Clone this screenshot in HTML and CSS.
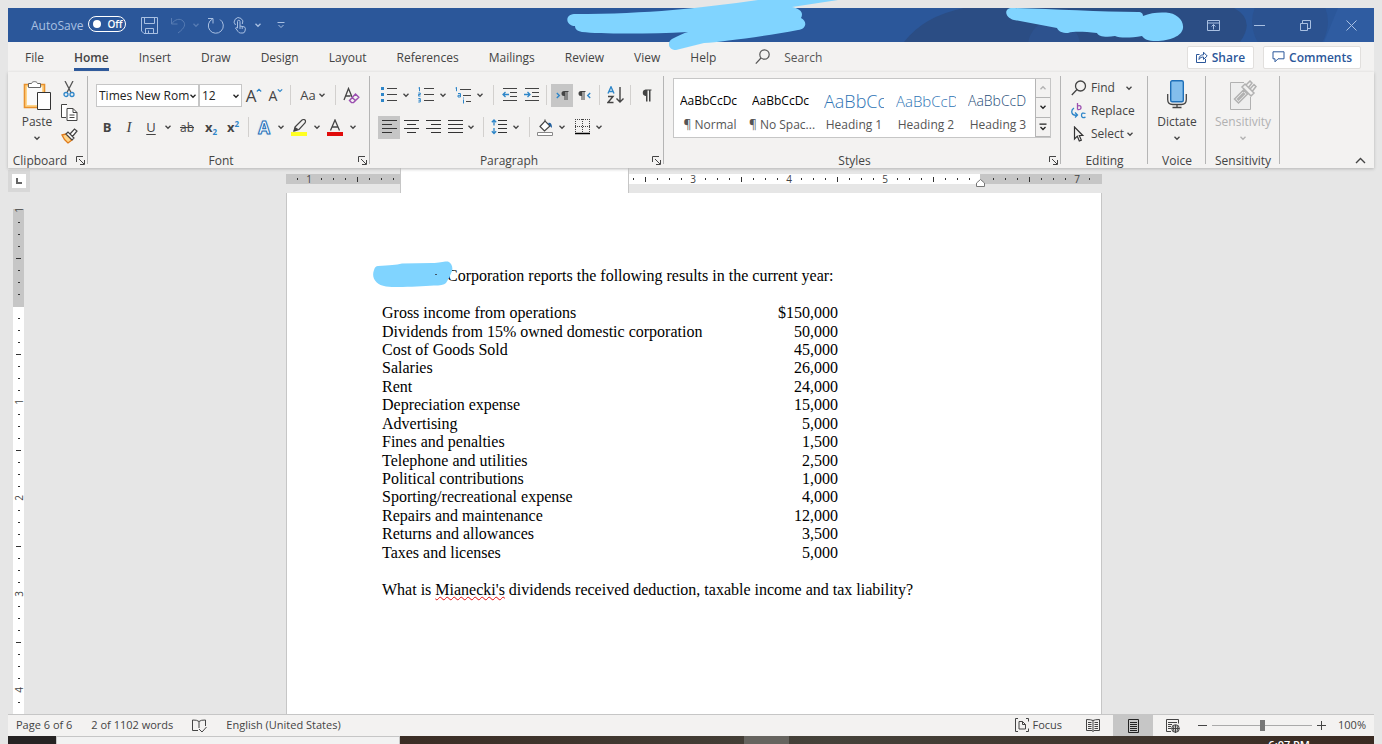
FILE: index.html
```html
<!DOCTYPE html>
<html lang="en">
    <head>
        <meta charset="UTF-8">
        <meta name="viewport" content="width=device-width, initial-scale=1.0">
        <title>Word</title>
        <link rel="stylesheet" href="styles.css">
    </head>
    <body>
        <svg class="defs" aria-hidden="true">
            <symbol id="caret" viewBox="0 0 8 8"><path d="M1.5 2.8 4 5.3 6.5 2.8" fill="none" stroke="currentColor" stroke-width="1.3"/></symbol>
            <symbol id="launcher" viewBox="0 0 9 9"><path d="M.5 6V.5H7M3 3l5 5M8.5 4v4.5H4" fill="none" stroke="currentColor"/></symbol>
        </svg>

        <div class="app">
            <header class="titlebar">
                <svg class="title-art" viewBox="0 0 470 34" preserveAspectRatio="xMaxYMid slice">
                    <path d="M60 0H330Q352 12 336 34H0Q20 8 60 0Z" fill="#2b4d84"/>
                    <circle cx="150" cy="38" r="26" fill="#2d528e"/>
                    <circle cx="386" cy="14" r="38" fill="#2b5290"/>
                    <path d="M434 0h36v34h-50Z" fill="#2f5ca1"/>
                </svg>
                <div class="quick-access">
                    <label for="autosave">AutoSave</label>
                    <span class="switch">
                        <input type="checkbox" id="autosave">
                        <span>Off</span>
                    </span>
                    <button class="quick save" aria-label="Save">
                        <svg width="17" height="17" viewBox="0 0 17 17"><path d="M.5.5h16v16H3L.5 14ZM3.500.5v6h10v-6M4.500 16.500v-5h8v5M7.500 16v-2.500" /></svg>
                    </button>
                    <button class="quick faded" aria-label="Undo">
                        <svg width="16" height="17" viewBox="0 0 16 17"><path d="M1.500 1v6h6M1.500 7C5 2 10 1 13 4s2 7-5 12"/></svg>
                    </button>
                    <button class="quick-caret faded" aria-label="Undo list"><svg class="caret"><use href="#caret"/></svg></button>
                    <button class="quick" aria-label="Repeat">
                        <svg width="18" height="17" viewBox="0 0 18 17"><path d="M1 1.500h5v5M5.500 2A7.500 7.500 0 1 0 13 2.500"/></svg>
                    </button>
                    <button class="quick touch" aria-label="Touch mode">
                        <svg width="14" height="17" viewBox="0 0 14 17"><path d="M4.500 11V4.500a1.200 1.200 0 0 1 2.500 0V9l4 .8q1.500.4 1.400 2L12 14q-.5 2-2 2H7.500q-1.500 0-2.500-1.500L2.500 11q.8-1.200 2 0M2.500 8A4.300 4.300 0 1 1 9.300 7M7 9v3M9.200 9.500v2.500"/></svg>
                    </button>
                    <button class="quick-caret" aria-label="Touch options"><svg class="caret"><use href="#caret"/></svg></button>
                    <button class="quick-caret more" aria-label="Customize toolbar">
                        <svg width="8" height="8" viewBox="0 0 8 8"><path d="M.5 1.500h7M1.500 4 4 6.500 6.500 4"/></svg>
                    </button>
                </div>
                <div class="window-buttons">
                    <button aria-label="Ribbon display options"><svg width="13" height="11" viewBox="0 0 13 11"><path d="M.5.5h12v10H.5ZM.5 3h12M6.500 9.500v-5M4.500 6.500l2-2 2 2"/></svg></button>
                    <button aria-label="Minimize"><svg width="11" height="11" viewBox="0 0 11 11"><path d="M0 5.500h11"/></svg></button>
                    <button aria-label="Restore"><svg width="11" height="11" viewBox="0 0 11 11"><path d="M.5 3.500h7v7h-7ZM2.500 3.500v-3h8v8h-3"/></svg></button>
                    <button aria-label="Close"><svg width="11" height="11" viewBox="0 0 11 11"><path d="m.5.5 10 10M10.500.5l-10 10"/></svg></button>
                </div>
                <svg class="mark mark-title" width="272" height="52" viewBox="566 0 272 52"><path d="M574 14C650 14 700 8 758 0H838L792 7C800 9 804 12 801 18 808 22 806 29 798 30 760 37 720 42 704 43L676 50C668 50 667 42 672 39 678 36 684 33 688 32 650 34 600 34 582 32 577 31 575 29 575 26 566 26 564 15 574 14Z"/></svg>
                <svg class="mark mark-user" width="180" height="36" viewBox="1005 7 180 36"><path d="M1012 8C1050 9 1100 12 1138 12 1142 12 1143 14 1143 16 1150 13 1158 12 1166 12.500 1176 13 1184 20 1183 28 1182 36 1170 41 1156 41 1148 41 1144 39 1142 36 1130 38 1120 38 1115 36 1105 38 1098 36 1097 33 1085 32 1075 31 1068 33 1062 33 1058 31 1057 28L1014 20C1004 17 1004 8 1012 8Z"/></svg>
            </header>

            <nav class="tabs">
                <button>File</button>
                <button class="active">Home</button>
                <button>Insert</button>
                <button>Draw</button>
                <button>Design</button>
                <button>Layout</button>
                <button>References</button>
                <button>Mailings</button>
                <button>Review</button>
                <button>View</button>
                <button>Help</button>
                <label class="search" for="search">
                    <svg width="16" height="16" viewBox="0 0 16 16" fill="none" stroke="#555" stroke-width="1.2"><circle cx="9.500" cy="5.500" r="4.700"/><path d="M6 9 .8 14.600"/></svg>
                    <input type="text" id="search" placeholder="Search" aria-label="Search">
                </label>
                <button class="boxed">
                    <svg width="12" height="12" viewBox="0 0 12 12" fill="none" stroke="#2b579a"><path d="M3.500 3.500h-3v8h9V8M3 8.500C3 5 5 3.800 7.500 3.800V1.200L11.200 5 7.500 8.400V6C5.500 6 4 6.500 3 8.500Z"/></svg>
                    Share
                </button>
                <button class="boxed">
                    <svg width="13" height="12" viewBox="0 0 13 12" fill="none" stroke="#2b579a"><path d="M1 .8h11v7H6l-3 3v-3H1Z"/></svg>
                    Comments
                </button>
            </nav>

            <section class="ribbon">
                <div class="group clipboard">
                    <div class="group-body">
                        <button class="big">
                            <svg width="28" height="30" viewBox="0 0 28 30">
                                <path d="M1.500 4.500h20v23h-20Z" fill="#ffd58a" stroke="#e8912d" stroke-width="1.600"/>
                                <path d="M4 7h15v18H4Z" fill="#fafafa"/>
                                <path d="M5.500 3.500h3C9 1 14 1 14.500 3.500h3v4h-12Z" fill="#fff" stroke="#666"/>
                                <path d="M14.500 12.500h13v17h-13Z" fill="#fff" stroke="#333"/>
                            </svg>
                            <span>Paste</span>
                            <svg class="caret"><use href="#caret"/></svg>
                        </button>
                        <div class="stack">
                            <button aria-label="Cut"><svg width="12" height="17" viewBox="0 0 12 17" fill="none"><path d="m2 0 6 11.500M10 0 4 11.500" stroke="#555" stroke-width="1.300"/><circle cx="3" cy="13.500" r="2" stroke="#2e86c9" stroke-width="1.300"/><circle cx="9" cy="13.500" r="2" stroke="#2e86c9" stroke-width="1.300"/></svg></button>
                            <button aria-label="Copy"><svg width="17" height="17" viewBox="0 0 17 17" fill="#fff" stroke="#444"><path d="M6 .500H.5V13.500H5M6 4.500h6l4 4v8H6Z"/><path d="M12 4.500v4h4M8.500 11h5M8.500 13.500h5" fill="none"/></svg></button>
                            <button aria-label="Format painter"><svg width="17" height="16" viewBox="0 0 17 16"><path d="m1 7 4-1 6 6-4 3Q3 12 1 7Z" fill="#ffd58a" stroke="#e07b1a" stroke-width="1.300"/><path d="m5 6 2-2 6 6-2 2ZM9 6l4.500-5 2.500 2-4.500 5.500Z" fill="#fff" stroke="#444" stroke-width="1.200"/></svg></button>
                        </div>
                    </div>
                    <footer><span>Clipboard</span><button class="launcher" aria-label="Clipboard options"><svg><use href="#launcher"/></svg></button></footer>
                </div>

                <div class="group font">
                    <div class="row">
                        <span class="combo name"><select aria-label="Font"><option>Times New Rom</option></select><svg class="caret"><use href="#caret"/></svg></span>
                        <span class="combo size"><select aria-label="Font size"><option>12</option></select><svg class="caret"><use href="#caret"/></svg></span>
                        <button class="tool grow" aria-label="Grow font"><span class="letter">A</span><svg width="6" height="14" viewBox="0 0 6 14" fill="none" stroke="#2e86c9" stroke-width="1.200"><path d="M.8 3.500 3 1.300l2.200 2.200"/></svg></button>
                        <button class="tool shrink" aria-label="Shrink font"><span class="letter">A</span><svg width="6" height="14" viewBox="0 0 6 14" fill="none" stroke="#2e86c9" stroke-width="1.200"><path d="M.8 1.300 3 3.500l2.200-2.200"/></svg></button>
                        <i class="bar"></i>
                        <button class="tool case">Aa<svg class="caret"><use href="#caret"/></svg></button>
                        <i class="bar"></i>
                        <button class="tool clear" aria-label="Clear formatting"><svg width="17" height="17" viewBox="0 0 17 17" fill="none"><path d="M1 13 5.500 1.500 9 10M2.500 9h5" stroke="#444" stroke-width="1.300"/><path d="m12.500 7 3.300 3.300-5.300 5.300h-2l-2-2ZM9 10.300l3.300 3.300" stroke="#9b4fb0" stroke-width="1.400"/></svg></button>
                    </div>
                    <div class="row">
                        <button class="tool bold">B</button>
                        <button class="tool italic">I</button>
                        <button class="tool underline">U</button>
                        <button class="drop" aria-label="Underline styles"><svg class="caret"><use href="#caret"/></svg></button>
                        <button class="tool strike">ab</button>
                        <button class="tool script">x<sub>2</sub></button>
                        <button class="tool script">x<sup>2</sup></button>
                        <i class="bar"></i>
                        <button class="tool effects">A</button>
                        <button class="drop" aria-label="Text effects list"><svg class="caret"><use href="#caret"/></svg></button>
                        <button class="tool wide" aria-label="Highlight"><svg width="16" height="17" viewBox="0 0 16 17"><path d="m4 8 7-7q2-1 3 0t0 3L8 10.500 3 12Z" fill="#f3f2f1" stroke="#444" stroke-width="1.200"/><path d="m2.500 12 1.500-4 4 2.500Z" fill="#444"/><path d="M0 13h16v4H0Z" fill="#ff2"/></svg></button>
                        <button class="drop" aria-label="Highlight colors"><svg class="caret"><use href="#caret"/></svg></button>
                        <button class="tool wide" aria-label="Font color"><svg width="16" height="17" viewBox="0 0 16 17"><path d="M3.500 11.500 8 1l4.500 10.500M5 8h6" fill="none" stroke="#444" stroke-width="1.300"/><path d="M0 13h16v4H0Z" fill="#e00b0b"/></svg></button>
                        <button class="drop" aria-label="Font colors"><svg class="caret"><use href="#caret"/></svg></button>
                    </div>
                    <footer><span>Font</span><button class="launcher" aria-label="Font options"><svg><use href="#launcher"/></svg></button></footer>
                </div>

                <div class="group paragraph">
                    <div class="row">
                        <button class="tool" aria-label="Bullets"><svg width="16" height="16" viewBox="0 0 16 16"><path d="M0 0h3v3H0ZM0 6h3v3H0ZM0 12h3v3H0Z" fill="#2e86c9"/><path d="M6 1.500h10M6 7.500h10M6 13.500h10" stroke="#444"/></svg></button>
                        <button class="drop" aria-label="Bullet styles"><svg class="caret"><use href="#caret"/></svg></button>
                        <button class="tool" aria-label="Numbering"><svg width="16" height="16" viewBox="0 0 16 16"><path d="M6 1.500h10M6 7.500h10M6 13.500h10" stroke="#444"/><path d="m.5 1 1-.8v4M.3 6h2v1.500h-2V9h2.200M.3 11.500h2V15h-2M.5 13.200h1.700" fill="none" stroke="#2e86c9"/></svg></button>
                        <button class="drop" aria-label="Numbering styles"><svg class="caret"><use href="#caret"/></svg></button>
                        <button class="tool" aria-label="Multilevel list"><svg width="16" height="17" viewBox="0 0 16 17"><path d="M5 2.500h11M8 8.500h8M11 14.500h5" stroke="#444"/><path d="m.5 1 1-.8v4M3 6.500h2.500V10H3V8.300h2.500M8.500 12.500v4M8.500 10.500v1" fill="none" stroke="#2e86c9"/></svg></button>
                        <button class="drop" aria-label="List levels"><svg class="caret"><use href="#caret"/></svg></button>
                        <i class="bar"></i>
                        <button class="tool" aria-label="Decrease indent"><svg width="15" height="14" viewBox="0 0 15 14" fill="none"><path d="M1 .5h14M8 4.500h7M8 8.500h7M1 12.500h14" stroke="#444"/><path d="M7 6.500H1M3.500 4 1 6.500 3.500 9" stroke="#2e86c9" stroke-width="1.300"/></svg></button>
                        <button class="tool" aria-label="Increase indent"><svg width="15" height="14" viewBox="0 0 15 14" fill="none"><path d="M1 .5h14M8 4.500h7M8 8.500h7M1 12.500h14" stroke="#444"/><path d="M0 6.500h6M3.500 4 6 6.500 3.500 9" stroke="#2e86c9" stroke-width="1.300"/></svg></button>
                        <i class="bar"></i>
                        <button class="tool on" aria-label="Left to right"><svg width="13" height="11" viewBox="0 0 13 11"><path d="m.8 3 2.500 2.500L.8 8" fill="none" stroke="#2e86c9" stroke-width="1.400"/><path d="M12.500 1H8a2.500 2.500 0 0 0 0 5h.5v4h1V2h1v8h1V2h1Z" fill="#444"/></svg></button>
                        <button class="tool" aria-label="Right to left"><svg width="13" height="11" viewBox="0 0 13 11"><path d="M12.200 3 9.700 5.500 12.200 8" fill="none" stroke="#2e86c9" stroke-width="1.400"/><path d="M7.500 1H3a2.500 2.500 0 0 0 0 5h.5v4h1V2h1v8h1V2h1Z" fill="#444"/></svg></button>
                        <i class="bar"></i>
                        <button class="tool" aria-label="Sort"><svg width="17" height="18" viewBox="0 0 17 18" fill="none" stroke-width="1.400"><path d="M1 7.500 4 .8l3 6.700M2 5.500h4" stroke="#2e86c9"/><path d="M1 10.500h5L1 16.500h5.500M13 1v15M9.500 12.500 13 16l3.500-3.500" stroke="#444"/></svg></button>
                        <i class="bar"></i>
                        <button class="tool" aria-label="Show marks"><svg width="11" height="13" viewBox="0 0 11 13"><path d="M10.500.5H4.500a3.300 3.300 0 0 0 0 6.500H5v5.500h1.500v-11h1.500v11h1.500v-11h1Z" fill="#444"/></svg></button>
                    </div>
                    <div class="row">
                        <button class="tool on" aria-label="Align left"><svg width="15" height="14" viewBox="0 0 15 14" stroke="#333"><path d="M0 .5h15M0 4.500h10M0 8.500h15M0 12.500h10"/></svg></button>
                        <button class="tool" aria-label="Center"><svg width="15" height="14" viewBox="0 0 15 14" stroke="#333"><path d="M0 .5h15M3 4.500h9M0 8.500h15M3 12.500h9"/></svg></button>
                        <button class="tool" aria-label="Align right"><svg width="15" height="14" viewBox="0 0 15 14" stroke="#333"><path d="M0 .5h15M5 4.500h10M0 8.500h15M5 12.500h10"/></svg></button>
                        <button class="tool" aria-label="Justify"><svg width="15" height="14" viewBox="0 0 15 14" stroke="#333"><path d="M0 .5h15M0 4.500h15M0 8.500h15M0 12.500h15"/></svg></button>
                        <button class="drop close" aria-label="Justify options"><svg class="caret"><use href="#caret"/></svg></button>
                        <i class="bar"></i>
                        <button class="tool" aria-label="Line spacing"><svg width="17" height="16" viewBox="0 0 17 16" fill="none"><path d="M7 1.500h9M7 5.500h9M7 9.500h9M7 13.500h9" stroke="#333"/><path d="M3 1v5.500M.8 3.200 3 1l2.200 2.200M3 9v5.500M.8 12.300 3 14.500l2.200-2.200" stroke="#2e86c9" stroke-width="1.300"/></svg></button>
                        <button class="drop" aria-label="Spacing options"><svg class="caret"><use href="#caret"/></svg></button>
                        <i class="bar"></i>
                        <button class="tool" aria-label="Shading"><svg width="17" height="17" viewBox="0 0 17 17"><path d="M3 7.500 8 2l5 5-5.500 5ZM8 2V.5" fill="#fff" stroke="#444" stroke-width="1.200"/><path d="M11 4q4-1 4 5l-2-2Z" fill="#1f5f9e"/><path d="M.5 13.500h15v3H.5Z" fill="#fff" stroke="#888"/></svg></button>
                        <button class="drop" aria-label="Shading colors"><svg class="caret"><use href="#caret"/></svg></button>
                        <button class="tool" aria-label="Borders"><svg width="15" height="16" viewBox="0 0 15 16"><path d="M0 .5h15M0 7.500h15M.5 0v14M7.500 0v14M14.500 0v14" stroke="#444" stroke-dasharray="1 1"/><path d="M0 14.500h15" stroke="#000" stroke-width="1.500"/></svg></button>
                        <button class="drop" aria-label="Border styles"><svg class="caret"><use href="#caret"/></svg></button>
                    </div>
                    <footer><span>Paragraph</span><button class="launcher" aria-label="Paragraph options"><svg><use href="#launcher"/></svg></button></footer>
                </div>

                <div class="group styles">
                    <div class="gallery">
                        <button class="style"><span class="sample">AaBbCcDc</span><span>¶ Normal</span></button>
                        <button class="style"><span class="sample">AaBbCcDc</span><span>¶ No Spac...</span></button>
                        <button class="style h1"><span class="sample">AaBbCc</span><span>Heading 1</span></button>
                        <button class="style h2"><span class="sample">AaBbCcD</span><span>Heading 2</span></button>
                        <button class="style h3"><span class="sample">AaBbCcD</span><span>Heading 3</span></button>
                        <div class="scroller">
                            <button class="up" aria-label="Scroll up"><svg class="caret"><use href="#caret"/></svg></button>
                            <button aria-label="Scroll down"><svg class="caret"><use href="#caret"/></svg></button>
                            <button aria-label="More styles"><svg width="8" height="8" viewBox="0 0 8 8" fill="none" stroke="#222" stroke-width="1.300"><path d="M.5 1.200h7M1.500 4 4 6.500 6.500 4"/></svg></button>
                        </div>
                    </div>
                    <footer><span>Styles</span><button class="launcher" aria-label="Style options"><svg><use href="#launcher"/></svg></button></footer>
                </div>

                <div class="group editing">
                    <div class="edit-list">
                        <button class="find"><svg width="16" height="16" viewBox="0 0 16 16" fill="none" stroke="#444" stroke-width="1.300"><circle cx="9.500" cy="6" r="5"/><path d="M6 9.500.8 15"/></svg><span>Find</span><svg class="caret"><use href="#caret"/></svg></button>
                        <button><svg width="16" height="16" viewBox="0 0 16 16" fill="none" stroke-width="1.300"><path d="M6.500 0v6.500M6.500 3q3.500-1 3.500 1.500T6.500 6.500" stroke="#9b4fb0"/><path d="M14.500 10.500q-4-1.500-4 1.800t4 1.800M3 5q-3 2-2 5t5.500 2M4 9.500l2.500 2.500L4 14.500" stroke="#2e86c9"/></svg><span>Replace</span></button>
                        <button><svg width="16" height="16" viewBox="0 0 16 16" fill="none" stroke="#333" stroke-width="1.200"><path d="M3.500 1v12l2.800-2.800 2 4.800 2-.9-2-4.600h3.500Z"/></svg><span>Select</span><svg class="caret"><use href="#caret"/></svg></button>
                    </div>
                    <footer><span>Editing</span></footer>
                </div>

                <div class="group voice">
                    <div class="group-body">
                        <button class="big">
                            <svg width="20" height="30" viewBox="0 0 20 30" fill="none"><rect x="3.700" y=".7" width="12.600" height="21" rx="1.500" fill="#83beec" stroke="#1e6fb8" stroke-width="1.400"/><path d="M.7 14v5.500q0 5 5 5h8.600q5 0 5-5V14M10 24.500v3M5.500 27.500h9" stroke="#444" stroke-width="1.300"/></svg>
                            <span>Dictate</span>
                            <svg class="caret"><use href="#caret"/></svg>
                        </button>
                    </div>
                    <footer><span>Voice</span></footer>
                </div>

                <div class="group sensitivity">
                    <div class="group-body">
                        <button class="big" disabled>
                            <svg width="28" height="30" viewBox="0 0 28 30" fill="none" stroke="#b1b1b1"><path d="M15 2.500H1.500v27h20V17" fill="#eee"/><path d="m5.500 19 9-9 4 4-9 9ZM8.500 19l6-6 1 1-6 6Z" stroke-width="1.500"/><path d="m13 7 3-3 9 9-3 3ZM17 5l4-4 2 2-3.500 4.500M21 9l4-4.500 2 2L23.500 11" stroke-width="1.500"/></svg>
                            <span>Sensitivity</span>
                            <svg class="caret"><use href="#caret"/></svg>
                        </button>
                    </div>
                    <footer><span>Sensitivity</span></footer>
                </div>
                <button class="collapse" aria-label="Collapse ribbon"><svg width="11" height="7" viewBox="0 0 11 7"><path d="M1 6 5.500 1.500 10 6" fill="none" stroke="#444" stroke-width="1.400"/></svg></button>
            </section>

            <main class="workspace">
                <div class="side">
                    <button class="tab-stop" aria-label="Tab stop"><svg width="6" height="6" viewBox="0 0 6 6"><path d="M1 0v5h5" fill="none" stroke="#666" stroke-width="2"/></svg></button>
                    <div class="v-ruler">
                        <div class="ticks shade"><b>1</b><i></i><i></i><i></i><i class="half"></i><i></i><i></i><i></i></div>
                        <div class="ticks">
                            <i></i><i></i><i></i><i class="half"></i><i></i><i></i><i></i>
                            <b>1</b><i></i><i></i><i></i><i class="half"></i><i></i><i></i><i></i>
                            <b>2</b><i></i><i></i><i></i><i class="half"></i><i></i><i></i><i></i>
                            <b>3</b><i></i><i></i><i></i><i class="half"></i><i></i><i></i><i></i>
                            <b>4</b><i></i>
                        </div>
                    </div>
                </div>
                <div class="sheet">
                    <div class="h-ruler">
                        <div class="ticks shade start"><i></i><b>1</b><i></i><i></i><i></i><i class="half"></i><i></i><i></i><i></i></div>
                        <div class="blank"></div>
                        <div class="ticks middle">
                            <i></i><i class="half"></i><i></i><i></i><i></i>
                            <b>3</b><i></i><i></i><i></i><i class="half"></i><i></i><i></i><i></i>
                            <b>4</b><i></i><i></i><i></i><i class="half"></i><i></i><i></i><i></i>
                            <b>5</b><i></i><i></i><i></i><i class="half"></i><i></i><i></i><i></i>
                        </div>
                        <div class="ticks shade end">
                            <i></i><i></i><i></i><i class="half"></i><i></i><i></i><i></i><b>7</b><i></i>
                            <svg class="indent" width="9" height="8" viewBox="0 0 9 8"><path d="M.5 7.500V4l4-3.500 4 3.500v3.500Z" fill="#fff" stroke="#777"/></svg>
                        </div>
                    </div>
                    <article class="page">
                        <p><span class="redacted"><svg class="mark" width="82" height="28" viewBox="372 260 82 28"><path d="M378 266C390 265 396 265 402 263.500L432 263C440 263 444 261 448 261.500 452 263 453 268 452 271 450 276 448 280 446 283 444 285 440 285.500 434 285.500 420 286 400 288 386 286.500 376 285 371 278 374 270 375 267 376 266 378 266Z"/><path d="M435 274.500h2" stroke="#456"/></svg></span>Corporation reports the following results in the current year:</p>
                        <table>
                            <tr><td>Gross income from operations</td><td>$150,000</td></tr>
                            <tr><td>Dividends from 15% owned domestic corporation</td><td>50,000</td></tr>
                            <tr><td>Cost of Goods Sold</td><td>45,000</td></tr>
                            <tr><td>Salaries</td><td>26,000</td></tr>
                            <tr><td>Rent</td><td>24,000</td></tr>
                            <tr><td>Depreciation expense</td><td>15,000</td></tr>
                            <tr><td>Advertising</td><td>5,000</td></tr>
                            <tr><td>Fines and penalties</td><td>1,500</td></tr>
                            <tr><td>Telephone and utilities</td><td>2,500</td></tr>
                            <tr><td>Political contributions</td><td>1,000</td></tr>
                            <tr><td>Sporting/recreational expense</td><td>4,000</td></tr>
                            <tr><td>Repairs and maintenance</td><td>12,000</td></tr>
                            <tr><td>Returns and allowances</td><td>3,500</td></tr>
                            <tr><td>Taxes and licenses</td><td>5,000</td></tr>
                        </table>
                        <p>What is <span class="misspelled">Mianecki's</span> dividends received deduction, taxable income and tax liability?</p>
                    </article>
                </div>
            </main>

            <footer class="statusbar">
                <span>Page 6 of 6</span>
                <span>2 of 1102 words</span>
                <svg width="15" height="14" viewBox="0 0 15 14" fill="none" stroke="#444"><path d="M7 2.500Q5 .8.500 1v10.500H6M7 2.500Q9 .8 13.500 1v6M7 2.500V9M7 10l3 3 4.500-5"/></svg>
                <span>English (United States)</span>
                <div class="view-tools">
                    <button class="focus"><svg width="14" height="14" viewBox="0 0 14 14" fill="none" stroke="#444"><path d="M3 .5H.5V13.500H3M11 .5h2.500v3M11 13.500h2.500v-3M4 3.500h3.500l3 3v4.500H4ZM7.500 3.500v3h3"/></svg>Focus</button>
                    <button class="view" aria-label="Read mode"><svg width="14" height="13" viewBox="0 0 14 13" fill="none" stroke="#444"><path d="M7 1.500Q5 .500.500.5v11H6L7 12.500 8 11.500h5.500V.500Q9 .5 7 1.500ZM7 1.500v11M2 3.500h3.500M2 5.500h3.500M2 7.500h3.500M2 9.500h3.500M8.500 3.500H12M8.500 5.500H12M8.500 7.500H12M8.500 9.500H12"/></svg></button>
                    <button class="view on" aria-label="Print layout"><svg width="11" height="14" viewBox="0 0 11 14" fill="none" stroke="#222"><path d="M.5.5h10v13H.5ZM2 3.500h7M2 5.500h7M2 7.500h7M2 9.500h7M2 11.500h7"/></svg></button>
                    <button class="view" aria-label="Web layout"><svg width="14" height="14" viewBox="0 0 14 14" fill="none" stroke="#444"><path d="M5 12.500H.5V.5h12v4M2 3.500h9M2 5.500h4M2 7.500h3M2 9.500h3"/><circle cx="9.500" cy="9.500" r="3.800"/><path d="M5.500 9.500h8M9.500 6v8M8 6.500Q7 9.500 8 12.500M11 6.500q1 3 0 6"/></svg></button>
                    <button class="zoom-step" aria-label="Zoom out"><svg width="9" height="9" viewBox="0 0 9 9" stroke="#444"><path d="M0 4.500h9"/></svg></button>
                    <input type="range" min="0" max="100" value="50" aria-label="Zoom">
                    <button class="zoom-step" aria-label="Zoom in"><svg width="9" height="9" viewBox="0 0 9 9" stroke="#444"><path d="M0 4.500h9M4.500 0v9"/></svg></button>
                    <span class="percent">100%</span>
                </div>
            </footer>
            <div class="taskbar">
                <div class="task-search"></div>
                <div class="task-active"></div>
                <time>6:07 PM</time>
            </div>
        </div>
    </body>
</html>
```
FILE: styles.css
```css
*{
    margin: 0;
    padding: 0;
    box-sizing: border-box;
}

body{
    height: 100vh;
    padding: 8px 8px 0;
    overflow: hidden;
    background-color: #e6e6e6;
    font-family: "Open Sans", "Noto Sans", sans-serif;
    font-size: 12px;
    color: #444;
}

button, input, select{
    font: inherit;
    color: inherit;
    background: none;
    border: none;
    outline: none;
}

button{
    display: flex;
    align-items: center;
    justify-content: center;
    flex-shrink: 0;
}

svg{
    flex-shrink: 0;
}

.defs{
    position: absolute;
    width: 0;
    height: 0;
}

.caret{
    width: 8px;
    height: 8px;
}

.app{
    display: flex;
    flex-direction: column;
    height: 100%;
}

.mark{
    position: absolute;
    fill: #80d4ff;
    z-index: 2;
}

/* title bar */
.titlebar{
    position: relative;
    display: flex;
    justify-content: space-between;
    height: 34px;
    background-color: #2b579a;
    color: #a9c0e2;
}

.titlebar svg:not(.mark):not(.title-art){
    fill: none;
    stroke: currentColor;
}

.title-art{
    position: absolute;
    right: 0;
    top: 0;
    width: 470px;
    height: 34px;
}

.mark-title{
    left: 558px;
    top: -8px;
}

.mark-user{
    right: 189px;
    top: -1px;
}

.quick-access, .window-buttons{
    position: relative;
    display: flex;
    align-items: center;
}

.quick-access{
    padding-left: 23px;
}

.switch{
    display: flex;
    align-items: center;
    width: 38px;
    height: 16px;
    margin: 0 11px 2px 5px;
    padding-left: 4px;
    gap: 6px;
    border: 1px solid white;
    border-radius: 8px;
    font-size: 10px;
    font-weight: 600;
    color: white;
}

.switch input{
    appearance: none;
    width: 8px;
    height: 8px;
    border-radius: 50%;
    background-color: white;
}

.quick{
    width: 24px;
    height: 24px;
}

.quick.save{
    margin-right: 5px;
}

.quick-caret{
    width: 12px;
    height: 24px;
    margin-right: 2px;
}

.quick-caret.more{
    margin-left: 9px;
}

.faded{
    opacity: 0.35;
}

.window-buttons button{
    width: 46px;
    height: 32px;
}

/* tabs */
.tabs{
    display: flex;
    align-items: center;
    height: 30px;
    padding: 0 13px 0 2px;
    background-color: #f3f2f1;
}

.tabs button{
    height: 28px;
    margin: 0 15px;
}

.tabs .active{
    border-bottom: 3px solid #2b579a;
    padding-top: 3px;
    font-weight: 600;
}

.search{
    display: flex;
    align-items: center;
    flex: 1;
    gap: 13px;
    margin-left: 24px;
}

.search input{
    width: 160px;
}

.search input::placeholder{
    color: #555;
    opacity: 1;
}

.tabs .boxed{
    height: 23px;
    margin: 0 0 0 9px;
    padding: 0 8px;
    gap: 4px;
    background-color: white;
    border: 1px solid #e1dfdd;
    border-radius: 2px;
    font-weight: 600;
    color: #2b579a;
}

/* ribbon */
.ribbon{
    position: relative;
    z-index: 1;
    display: flex;
    height: 96px;
    background-color: #f3f2f1;
    box-shadow: 0 1px 3px #b5b5b5;
}

.group{
    display: flex;
    flex-direction: column;
    flex-shrink: 0;
    padding-top: 11px;
    background: linear-gradient(#b5b5b5, #b5b5b5) right 0 top 4px / 1px 88px no-repeat;
}

.clipboard{ width: 80px; }
.font{ width: 282px; }
.paragraph{ width: 294px; }
.styles{ width: 397px; }
.editing{ width: 87px; }
.voice{ width: 58px; }
.sensitivity{ width: 74px; }

.clipboard, .styles, .voice, .sensitivity{
    padding-top: 6px;
}

.editing{
    padding-top: 4px;
}

.group footer{
    display: flex;
    align-items: center;
    height: 16px;
    margin-top: auto;
    text-align: center;
}

.group footer span{
    flex: 1;
}

.launcher{
    width: 16px;
    height: 16px;
}

.launcher svg{
    width: 9px;
    height: 9px;
}

.group-body{
    display: flex;
    justify-content: center;
}

.clipboard .group-body{
    padding-right: 2px;
}

.big{
    flex-direction: column;
    justify-content: flex-start;
    width: 44px;
    padding-top: 2px;
}

.big span{
    line-height: 24px;
}

.big:disabled{
    color: #b1b1b1;
}

.stack button{
    width: 20px;
    height: 23px;
}

.row{
    display: flex;
    align-items: center;
    height: 24px;
    margin-bottom: 8px;
    padding-left: 8px;
}

.tool{
    width: 22px;
    height: 23px;
    font-size: 13px;
}

.tool.wide{
    width: 24px;
}

.drop{
    width: 15px;
    height: 23px;
    padding-right: 3px;
}

.drop.close{
    width: 13px;
}

.font .drop{
    width: 12px;
    padding: 0;
}

.on{
    background-color: #c6c6c6;
}

.bar{
    width: 1px;
    height: 20px;
    margin: 0 4px;
    background-color: #d2d0ce;
}

.combo{
    position: relative;
    height: 23px;
    background-color: white;
    border: 1px solid #c6c6c6;
    color: #222;
}

.combo select{
    appearance: none;
    width: 100%;
    height: 21px;
    padding-left: 2px;
}

.combo .caret{
    position: absolute;
    right: 1px;
    top: 7px;
    pointer-events: none;
}

.combo.name{
    width: 103px;
}

.combo.size{
    width: 43px;
}

.grow{
    width: 24px;
}

.shrink{
    width: 20px;
}

.letter{
    font-size: 17px;
}

.shrink .letter{
    font-size: 14px;
}

.case{
    width: 36px;
    gap: 2px;
}

.bold{
    font-weight: bold;
}

.italic{
    font-family: "Liberation Serif", serif;
    font-size: 15px;
    font-style: italic;
}

.underline{
    text-decoration: underline;
    text-underline-offset: 2px;
}

.strike{
    width: 26px;
    font-size: 12px;
    text-decoration: line-through;
}

.script{
    font-weight: bold;
}

.script sub, .script sup{
    font-size: 8px;
    color: #2e86c9;
}

.script sub{
    margin-top: 8px;
}

.script sup{
    margin-bottom: 8px;
}

.effects{
    font-size: 17px;
    font-weight: bold;
    color: white;
    -webkit-text-stroke: 1px #1e6fb8;
    text-shadow: 0 0 2px #7fb8e6;
}

/* style gallery */
.gallery{
    display: flex;
    height: 60px;
    margin: 0 10px 0 9px;
    background-color: white;
    border: 1px solid #c6c6c6;
}

.style{
    flex-direction: column;
    width: 72px;
    padding-top: 8px;
    color: #555;
}

.style span{
    line-height: 22px;
}

.style .sample{
    width: 60px;
    line-height: 26px;
    overflow: hidden;
    text-align: left;
    color: black;
}

.style.h1 .sample{
    font-size: 18px;
    font-weight: 300;
    color: #2e74b5;
}

.style.h2 .sample{
    font-size: 15px;
    font-weight: 300;
    color: #2e74b5;
}

.style.h3 .sample{
    font-size: 14px;
    font-weight: 300;
    color: #1f4d78;
}

.scroller{
    display: flex;
    flex-direction: column;
    width: 15px;
    margin-left: auto;
    color: #222;
}

.scroller button{
    flex: 1;
    border-left: 1px solid #b5b5b5;
    border-bottom: 1px solid #b5b5b5;
    background-color: #f3f2f1;
}

.scroller .up{
    color: #b1b1b1;
}

.scroller .up svg{
    transform: rotate(180deg);
}

.edit-list button{
    height: 23px;
    padding-left: 10px;
    gap: 4px;
}

.edit-list .caret{
    margin-left: -2px;
}

.edit-list .find .caret{
    margin-left: 6px;
}

.collapse{
    width: 24px;
    height: 16px;
    margin: auto 2px 0 auto;
}

/* rulers and page */
.workspace{
    display: flex;
    flex: 1;
    min-height: 0;
    padding-right: 10px;
}

.side{
    width: 16px;
}

.tab-stop{
    width: 22px;
    height: 22px;
    margin: 2px 0 17px;
    background-color: white;
    border: 4px solid #d8d8d8;
}

.v-ruler{
    width: 11px;
    margin-left: 5px;
}

.ticks{
    display: flex;
    background-color: white;
}

.ticks b, .ticks i{
    display: flex;
    align-items: center;
    justify-content: center;
    flex: 0 0 12px;
    min-height: 0;
    font-size: 10px;
    font-weight: normal;
    line-height: 10px;
}

.ticks i::after{
    content: "";
    width: 1px;
    height: 2px;
    background-color: #333;
}

.ticks .half::after{
    height: 5px;
}

.ticks.shade{
    background-color: #c6c6c6;
}

.v-ruler .ticks{
    flex-direction: column;
    height: 408px;
    padding-top: 5px;
}

.v-ruler .shade{
    height: 98px;
    padding: 0;
}

.v-ruler .shade b{
    margin-top: -5px;
}

.v-ruler b{
    transform: rotate(-90deg);
}

.v-ruler i::after{
    width: 2px;
    height: 1px;
}

.v-ruler .half::after{
    width: 5px;
    height: 1px;
}

.sheet{
    display: flex;
    flex-direction: column;
    width: 816px;
    margin: 0 auto;
}

.h-ruler{
    display: flex;
    height: 25px;
}

.h-ruler .ticks{
    height: 10px;
    margin-top: 6px;
}

.h-ruler .start{
    width: 114px;
    padding-left: 5px;
}

.blank{
    width: 229px;
    background-color: white;
    border: 1px solid #c6c6c6;
    border-width: 0 1px;
}

.h-ruler .middle{
    width: 351px;
    padding-right: 5px;
    justify-content: flex-end;
}

.h-ruler .end{
    position: relative;
    flex: 1;
    padding-left: 7px;
}

.indent{
    position: absolute;
    left: -4px;
    top: 5px;
}

.page{
    flex: 1;
    padding: 74px 95px 0;
    background-color: white;
    border: 1px solid #c6c6c6;
    border-width: 0 1px;
    font-family: "Liberation Serif", "Times New Roman", serif;
    font-size: 16px;
    line-height: 18px;
    color: black;
}

.page table{
    width: 456px;
    height: 258px;
    margin: 19px 0;
    border-collapse: collapse;
}

.page td + td{
    text-align: right;
}

.redacted{
    position: relative;
    display: inline-block;
    width: 65px;
}

.redacted .mark{
    left: -10px;
    bottom: -7px;
}

.misspelled{
    text-decoration: underline wavy #e00b0b 1px;
}

/* status bar */
.statusbar{
    display: flex;
    align-items: center;
    flex-shrink: 0;
    height: 22px;
    padding: 0 8px;
    gap: 19px;
    background-color: #f3f2f1;
    border-top: 1px solid #c6c6c6;
    font-size: 11px;
}

.statusbar span, .focus{
    padding-bottom: 2px;
}

.view-tools{
    display: flex;
    align-items: center;
    margin-left: auto;
}

.focus{
    gap: 3px;
    margin-right: 11px;
}

.view{
    width: 40px;
    height: 21px;
}

.zoom-step{
    width: 19px;
    height: 21px;
}

.view-tools input{
    appearance: none;
    width: 100px;
    height: 1px;
    background-color: #aaa;
}

.view-tools input::-webkit-slider-thumb{
    appearance: none;
    width: 5px;
    height: 11px;
    background-color: #777;
}

.percent{
    margin-left: 7px;
}

.taskbar{
    display: flex;
    flex-shrink: 0;
    height: 8px;
    padding-left: 48px;
    overflow: hidden;
    background: linear-gradient(to right, #262323 48px, #3b2d25 392px, #45423a 60%, #3a2a22);
}

.task-search{
    width: 344px;
    background-color: #f2f2f2;
    border: 1px solid #c6c6c6;
    border-bottom: none;
}

.task-active{
    width: 45px;
    margin-left: 344px;
    background-color: #66645f;
}

.taskbar time{
    margin: 1px 64px 0 auto;
    font-size: 11px;
    font-weight: 600;
    color: white;
}
```
